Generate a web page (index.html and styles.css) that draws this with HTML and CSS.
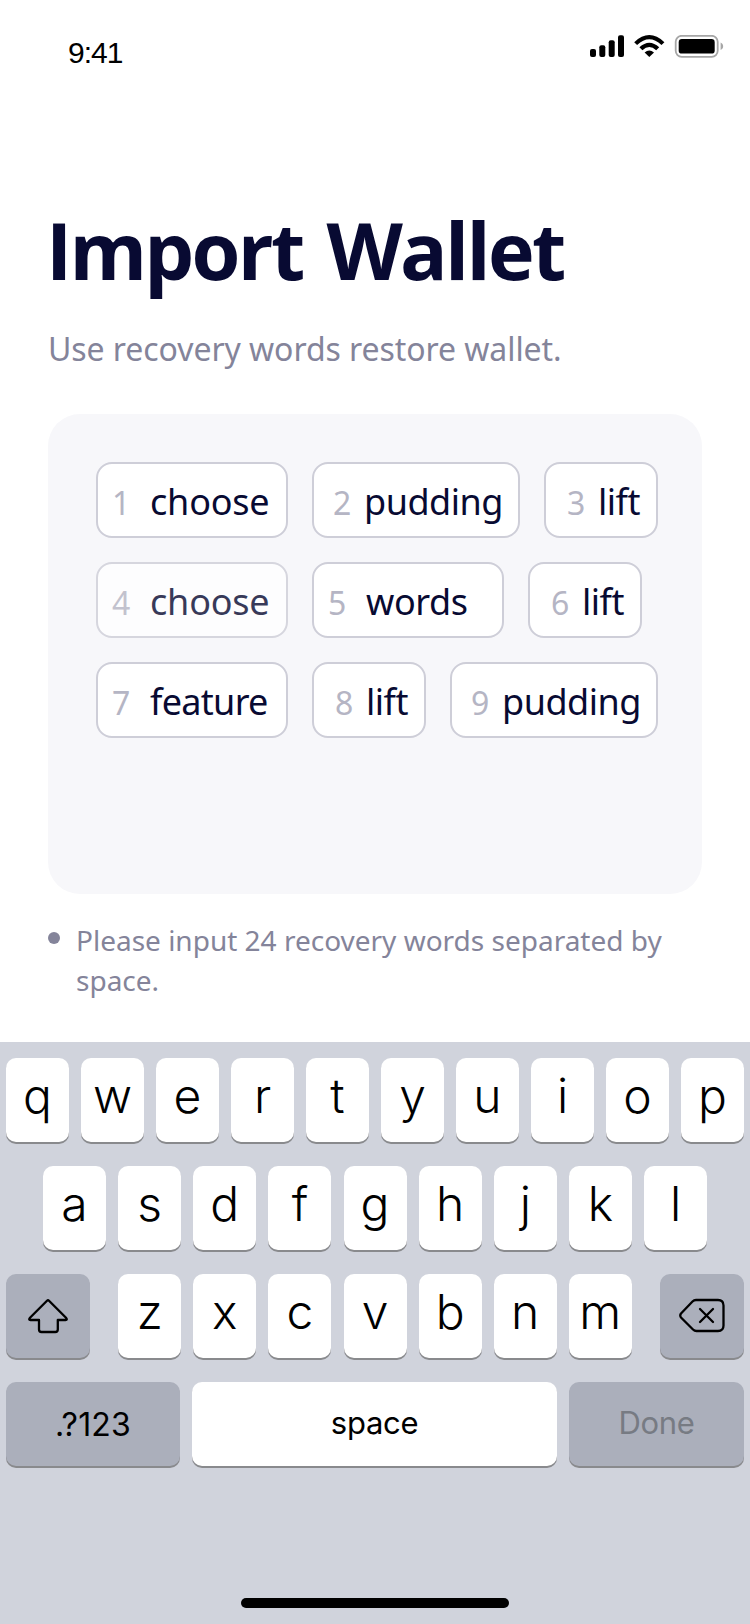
FILE: index.html
```html
<!DOCTYPE html>
<html lang="en">
<head>
<meta charset="utf-8">
<title>Import Wallet</title>
<link rel="stylesheet" href="styles.css">
</head>
<body>
<div class="screen">
  <header class="status">
    <span class="time">9:41</span>
    <svg class="status-icons" width="136" height="24" viewBox="0 0 136 24">
      <rect x="0" y="14" width="6" height="8" rx="2"/>
      <rect x="9.3" y="10.3" width="6" height="11.7" rx="2"/>
      <rect x="18.7" y="5.3" width="6" height="16.7" rx="2"/>
      <rect x="28" y="0.3" width="6" height="21.7" rx="2"/>
      <path d="M44.2 7.2Q59.3-7 74.4 7.2L71.5 10Q59.3-1.4 47.1 10Z"/>
      <path d="M49.4 12.3Q59.3 3.1 69.2 12.3L66.2 15.2Q59.3 8.9 52.4 15.2Z"/>
      <path d="M54.6 17.5Q59.3 13.7 64 17.5L59.3 22Z"/>
      <rect x="85.7" y="0.8" width="42" height="21" rx="6" fill="none" stroke="#a6a6a6" stroke-width="1.8"/>
      <rect x="88.7" y="4" width="36" height="14.6" rx="3.2"/>
      <path d="M130.6 7.5C134 9 134 13.6 130.6 15Z" fill="#a6a6a6"/>
    </svg>
  </header>
  <main class="content">
    <h1 class="title">Import Wallet</h1>
    <p class="subtitle">Use recovery words restore wallet.</p>
    <section class="panel">
      <div class="row">
        <div class="chip choose"><span class="num">1</span><span class="word">choose</span></div>
        <div class="chip pudding"><span class="num">2</span><span class="word">pudding</span></div>
        <div class="chip lift"><span class="num">3</span><span class="word">lift</span></div>
      </div>
      <div class="row">
        <div class="chip choose faded"><span class="num">4</span><span class="word">choose</span></div>
        <div class="chip words"><span class="num">5</span><span class="word">words</span></div>
        <div class="chip lift"><span class="num">6</span><span class="word">lift</span></div>
      </div>
      <div class="row">
        <div class="chip feature"><span class="num">7</span><span class="word">feature</span></div>
        <div class="chip lift"><span class="num">8</span><span class="word">lift</span></div>
        <div class="chip pudding"><span class="num">9</span><span class="word">pudding</span></div>
      </div>
    </section>
    <div class="hint"><span class="dot"></span><p class="hint-text">Please input 24 recovery words separated by<br>space.</p></div>
  </main>
  <section class="keyboard">
    <div class="keys"><div class="key">q</div><div class="key">w</div><div class="key">e</div><div class="key">r</div><div class="key">t</div><div class="key">y</div><div class="key">u</div><div class="key">i</div><div class="key">o</div><div class="key">p</div></div>
    <div class="keys middle"><div class="key">a</div><div class="key">s</div><div class="key">d</div><div class="key">f</div><div class="key">g</div><div class="key">h</div><div class="key">j</div><div class="key">k</div><div class="key">l</div></div>
    <div class="keys split">
      <div class="key gray side"><svg width="42" height="38" viewBox="0 0 42 38"><path d="M20 2.8Q21 1.8 22 2.8L39 19.8Q40.8 22 38.5 22H30.8V31.5Q30.8 34 28.3 34H14.5Q12 34 12 31.5V22H3.5Q1.2 22 3 19.8Z"/></svg></div>
      <div class="letters"><div class="key">z</div><div class="key">x</div><div class="key">c</div><div class="key">v</div><div class="key">b</div><div class="key">n</div><div class="key">m</div></div>
      <div class="key gray side"><svg width="46" height="38" viewBox="0 0 46 38"><path d="M17 2H39Q44.5 2 44.5 7.5V27.5Q44.5 33 39 33H17.5Q15.5 33 14 31.5L2 19.5Q.5 17.5 2 15.5L13.5 3.5Q15 2 17 2Z"/><path d="M21 11L34 24M34 11L21 24"/></svg></div>
    </div>
    <div class="keys bottom">
      <div class="key gray label numbers">.?123</div>
      <div class="key label space">space</div>
      <div class="key gray label done">Done</div>
    </div>
    <div class="home"></div>
  </section>
</div>
</body>
</html>
```
FILE: styles.css
```css
* { box-sizing: border-box; }
body { margin: 0; background: #fff; }
h1, p { margin: 0; }
.screen {
  width: 750px;
  height: 1624px;
  display: flex;
  flex-direction: column;
  overflow: hidden;
  font-family: "Noto Sans", "Open Sans", sans-serif;
  color: #080a32;
}
.status {
  height: 88px;
  display: flex;
  justify-content: space-between;
  align-items: flex-start;
  padding: 35px 24px 0 68px;
}
.time {
  font: 30px/36px "Liberation Sans", Arial, sans-serif;
  letter-spacing: -1px;
  color: #000;
}
.status-icons { fill: #000; }
.content { height: 954px; padding: 118px 48px 0; }
.title {
  font-family: "Open Sans", "Noto Sans", sans-serif;
  font-size: 79px;
  line-height: 88px;
  font-weight: 700;
  letter-spacing: -2.7px;
  word-spacing: 6px;
  margin-left: -2px;
  white-space: nowrap;
}
.subtitle {
  margin-top: 33px;
  font-size: 32px;
  line-height: 44px;
  letter-spacing: -0.07px;
  color: #84849a;
  white-space: nowrap;
}
.panel {
  margin-top: 43px;
  height: 480px;
  padding: 48px;
  border-radius: 32px;
  background: #f7f7fa;
  display: flex;
  flex-direction: column;
  gap: 24px;
}
.row { display: flex; gap: 24px; margin-right: -8px; }
.chip {
  height: 76px;
  flex: none;
  display: flex;
  align-items: baseline;
  padding: 13px 0 0 14px;
  border: 2px solid #ceced8;
  border-radius: 16px;
  background: #fff;
  white-space: nowrap;
}
.num { width: 38px; font-size: 32px; line-height: 50px; color: #b5b5c4; }
.word { font-size: 36px; line-height: 50px; letter-spacing: -0.2px; }
.feature .word { letter-spacing: -0.7px; }
.words .word { letter-spacing: -0.4px; }
.choose, .words, .feature { width: 192px; }
.pudding { width: 208px; padding-left: 19px; }
.pudding .num { width: 31px; }
.pudding .word { letter-spacing: -0.5px; }
.lift { width: 114px; padding-left: 21px; }
.lift .num { width: 31px; }
.lift .word { letter-spacing: -0.5px; }
.faded { opacity: 0.8; }
.hint { display: flex; gap: 16px; margin-top: 26px; }
.dot { width: 12px; height: 12px; margin-top: 12px; border-radius: 50%; background: #84849a; }
.hint-text { font-size: 28px; line-height: 40px; color: #84849a; white-space: nowrap; }
.keyboard {
  height: 582px;
  padding: 16px 6px 0;
  background: #d0d3dc;
  display: flex;
  flex-direction: column;
  gap: 24px;
  font-family: Inter, "Liberation Sans", sans-serif;
  color: #000;
}
.keys { display: flex; gap: 12px; height: 84px; }
.middle { padding-left: 37px; gap: 12.15px; }
.split { justify-content: space-between; }
.letters { display: flex; gap: 12.1px; }
.key {
  width: 63px;
  height: 84px;
  flex: none;
  padding-top: 7px;
  border-radius: 10px;
  background: #fff;
  box-shadow: 0 2px 0 #898a8d;
  font-size: 48px;
  line-height: 62px;
  font-weight: 350;
  text-align: center;
}
.gray { background: #abafbb; }
.side { width: 84px; padding-top: 24px; line-height: 0; }
.side svg { fill: none; stroke: #000; stroke-width: 2.3; stroke-linejoin: round; stroke-linecap: round; }
.bottom { gap: 12px; }
.label { font-size: 31px; line-height: 68px; font-weight: 400; letter-spacing: -0.3px; }
.numbers { width: 174px; font-size: 32px; padding-top: 9px; letter-spacing: 0.2px; }
.space { width: 365px; }
.done { width: 175px; color: #777b83; }
.home { width: 268px; height: 10px; margin: 108px auto 0; border-radius: 5px; background: #000; }
```
